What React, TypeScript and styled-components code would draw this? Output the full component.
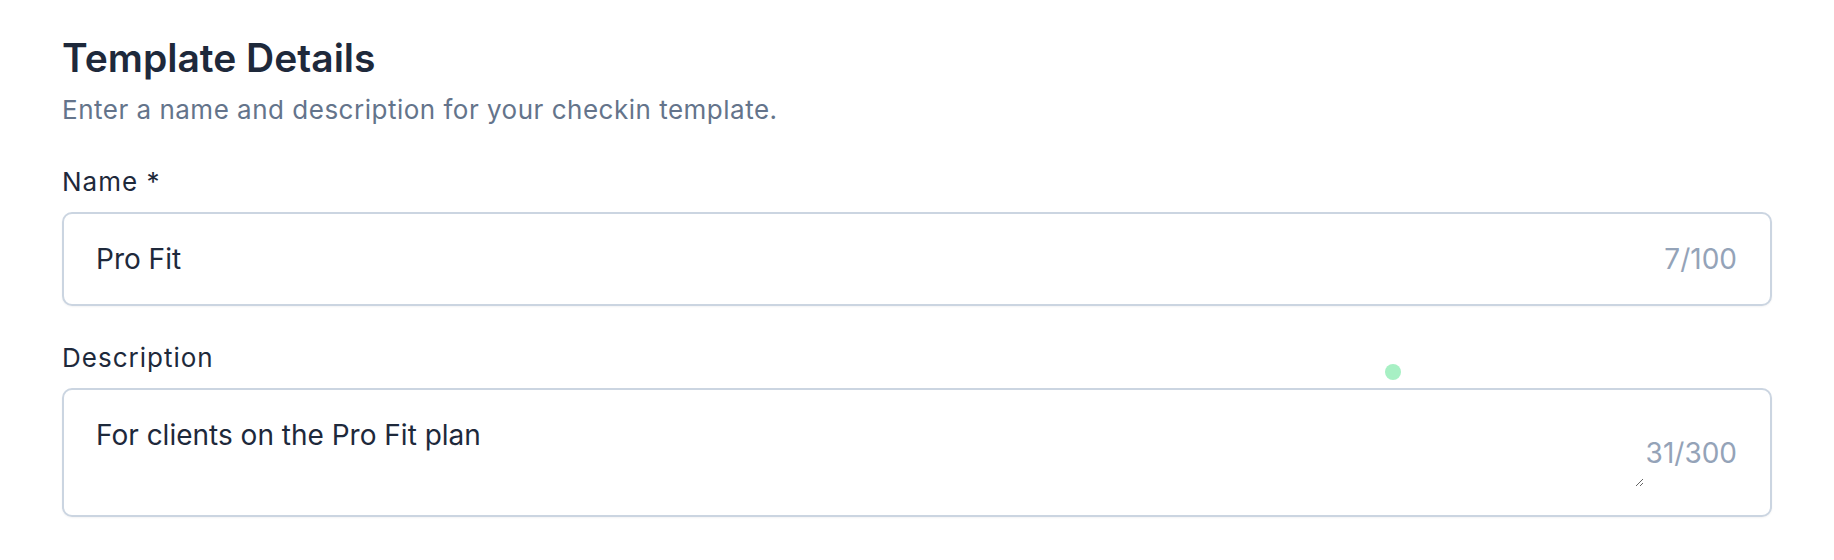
import React, { useState } from "react";
import styled, { createGlobalStyle } from "styled-components";

const NAME_MAX = 100;
const DESCRIPTION_MAX = 300;

export default function App() {
  const [name, setName] = useState("Pro Fit");
  const [description, setDescription] = useState("For clients on the Pro Fit plan");

  return (
    <>
      <GlobalStyle />
      <Page>
        <Title>Template Details</Title>
        <Subtitle>Enter a name and description for your checkin template.</Subtitle>

        <Field>
          <Label htmlFor="template-name">Name *</Label>
          <InputShell>
            <TextInput
              id="template-name"
              value={name}
              maxLength={NAME_MAX}
              onChange={(e) => setName(e.target.value)}
            />
            <Counter>
              {name.length}/{NAME_MAX}
            </Counter>
          </InputShell>
        </Field>

        <Field>
          <Label htmlFor="template-description">Description</Label>
          <TextAreaShell>
            <TextArea
              id="template-description"
              value={description}
              maxLength={DESCRIPTION_MAX}
              onChange={(e) => setDescription(e.target.value)}
            />
            <Counter $nudge={3}>
              {description.length}/{DESCRIPTION_MAX}
            </Counter>
          </TextAreaShell>
        </Field>

        <StatusDot />
      </Page>
    </>
  );
}

// ======================
// Styled Components
// ======================

const GlobalStyle = createGlobalStyle`
  * {
    box-sizing: border-box;
  }

  body {
    margin: 0;
    background: #ffffff;
    font-family: Inter, "Noto Sans", sans-serif;
    color: #1e293b;
  }
`;

const Page = styled.div`
  position: relative;
  display: flex;
  flex-direction: column;
  padding: 34px 62px 40px;
`;

const Title = styled.h1`
  margin: 0;
  font-size: 39px;
  line-height: 47px;
  font-weight: 600;
  color: #1e293b;
`;

const Subtitle = styled.p`
  margin: 13px 0 0;
  font-size: 26px;
  line-height: 32px;
  font-weight: 400;
  letter-spacing: 0.5px;
  color: #64748b;
`;

const Field = styled.div`
  display: flex;
  flex-direction: column;
  gap: 14px;
  margin-top: 40px;

  & + & {
    margin-top: 36px;
  }
`;

const Label = styled.label`
  font-size: 26px;
  line-height: 32px;
  font-weight: 400;
  letter-spacing: 1px;
  color: #1e293b;
`;

const Shell = styled.div`
  display: flex;
  align-items: center;
  gap: 2px;
  background: #ffffff;
  border: 2px solid #cbd5e1;
  border-radius: 10px;
  box-shadow: 0 1px 2px rgba(15, 23, 42, 0.05);
  padding: 0 33px 0 32px;
`;

const InputShell = styled(Shell)`
  height: 94px;
`;

const TextAreaShell = styled(Shell)`
  padding-top: 25px;
  padding-bottom: 28px;
`;

const TextInput = styled.input`
  flex: 1;
  min-width: 0;
  border: none;
  outline: none;
  background: transparent;
  padding: 0;
  font-family: inherit;
  font-size: 28px;
  line-height: 40px;
  height: 40px;
  color: #1e293b;
`;

const TextArea = styled.textarea`
  flex: 1;
  min-width: 0;
  height: 72px;
  border: none;
  outline: none;
  background: transparent;
  padding: 0;
  font-family: inherit;
  font-size: 28px;
  line-height: 40px;
  color: #1e293b;
  resize: vertical;
  overflow: hidden;
`;

const Counter = styled.span<{ $nudge?: number }>`
  flex-shrink: 0;
  margin-top: ${({ $nudge }) => $nudge ?? 0}px;
  font-size: 28px;
  line-height: 40px;
  color: #94a3b8;
`;

const StatusDot = styled.span`
  position: absolute;
  left: 1385px;
  top: 364px;
  width: 16px;
  height: 16px;
  border-radius: 50%;
  background: #a7f0c4;
`;
